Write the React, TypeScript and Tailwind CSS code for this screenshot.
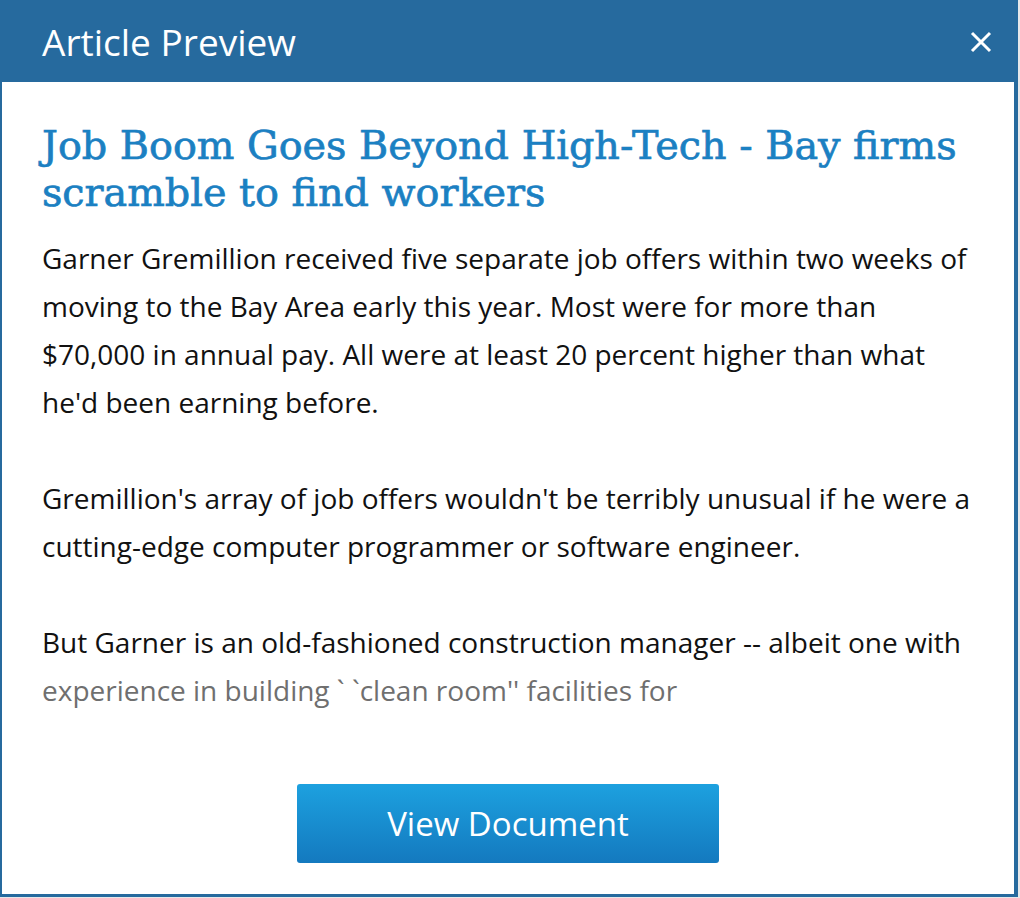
import React from "react";

const paragraphs: string[] = [
  "Garner Gremillion received five separate job offers within two weeks of moving to the Bay Area early this year. Most were for more than $70,000 in annual pay. All were at least 20 percent higher than what he'd been earning before.",
  "Gremillion's array of job offers wouldn't be terribly unusual if he were a cutting-edge computer programmer or software engineer.",
];

const App: React.FC = () => {
  return (
    <div className="flex h-[898px] w-[1020px] bg-[#e6e8ea] overflow-hidden">
      <div className="flex flex-col w-[1018px] h-[897px] border-l-2 border-r-4 border-b-[3px] border-[#266a9e] bg-white">
        {/* header */}
        <div className="flex items-center justify-between h-[82px] bg-[#266a9e] pl-10 pr-[22px] text-white">
          <h2 className="text-[37px] font-['Open_Sans',sans-serif] font-normal pt-[2px]">
            Article Preview
          </h2>
          <svg width="22" height="22" viewBox="0 0 22 22" className="mt-[2px]">
            <path d="M2 2 L20 20 M20 2 L2 20" stroke="white" strokeWidth="3" />
          </svg>
        </div>

        <div className="flex flex-col pl-10 pr-[40px] pt-[40px] font-['Open_Sans',sans-serif]">
          <h1 className="text-[#1b80c2] text-[39.7px] leading-[47px] font-['DejaVu_Serif',serif] font-normal [-webkit-text-stroke:0.7px_#1b80c2]">
            Job Boom Goes Beyond High-Tech - Bay firms scramble to find workers
          </h1>

          <div className="mt-[18px] text-[28px] leading-[48px] text-[#111]">
            {paragraphs.map((p, i) => (
              <p key={i} className="mb-[48px]">
                {p}
              </p>
            ))}
            <p>
              But Garner is an old-fashioned construction manager -- albeit one with
              <br />
              <span className="text-[#6f6f6f]">
                experience in building ` `clean room'' facilities for
              </span>
            </p>
          </div>

          <div className="flex justify-center mt-[70px]">
            <button className="w-[422px] h-[79px] rounded-[3px] bg-gradient-to-b from-[#1da1df] to-[#1479bf] text-white text-[33px] font-['Open_Sans',sans-serif]">
              View Document
            </button>
          </div>
        </div>
      </div>
    </div>
  );
};

export default App;
